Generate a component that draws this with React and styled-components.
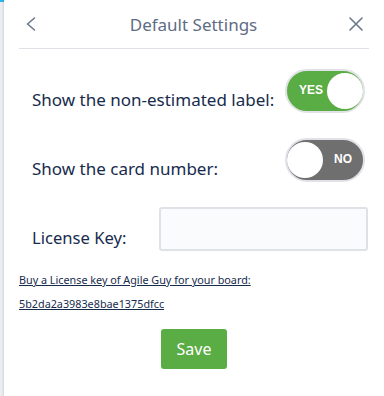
import styled, { createGlobalStyle } from 'styled-components'

const GlobalStyle = createGlobalStyle`
  body {
    margin: 0;
    background: #fff;
    font-family: "Noto Sans", "Open Sans", sans-serif;
  }
`;

const Page = styled.div`
  display: flex;
  width: 384px;
  height: 396px;
  overflow: hidden;
`;

const Backdrop = styled.div`
  width: 4px;
  flex-shrink: 0;
  background: #eceef2;
  border-top: 2px solid #29b6e8;
`;

const Panel = styled.div`
  flex: 1;
  background: #fff;
  padding: 0 15px;
  box-shadow: -1px 0 2px rgba(9, 30, 66, 0.12);
`;

const Header = styled.div`
  display: flex;
  align-items: center;
  justify-content: space-between;
  height: 48px;
  padding: 0 1px 0 0;
  border-bottom: 1px solid #dfe1e6;
`;

const IconButton = styled.button`
  display: flex;
  align-items: center;
  justify-content: center;
  width: 24px;
  height: 24px;
  padding: 0;
  border: none;
  background: none;
  color: #6b778c;
  cursor: pointer;
`;

const Title = styled.h2`
  margin: 0;
  font-size: 17px;
  font-weight: 400;
  color: #5e6c84;
`;

const Body = styled.div`
  padding: 20px 0 0;
`;

const Row = styled.div`
  display: flex;
  align-items: flex-start;
  justify-content: space-between;
  padding-left: 13px;
  margin-bottom: 25px;
`;

const Label = styled.label`
  padding-top: 19px;
  font-size: ${p => p.size || 17}px;
  line-height: 24px;
  color: #172b4d;
`;

const Switch = styled.div`
  position: relative;
  display: flex;
  align-items: center;
  justify-content: ${p => (p.on ? 'flex-start' : 'flex-end')};
  box-sizing: border-box;
  width: 80px;
  height: 44px;
  margin-right: 4px;
  padding: 0 11px 0 12px;
  border: 2px solid #e1e2e8;
  border-radius: 22px;
  background: ${p => (p.on ? '#5aac44' : '#6f6f6f')};
`;

const SwitchText = styled.span`
  font-family: "Liberation Sans", Arial, sans-serif;
  font-weight: 700;
  font-size: 12px;
  color: #fff;
  margin-top: -2px;
`;

const Knob = styled.span`
  position: absolute;
  top: 2px;
  ${p => (p.on ? 'right: 0;' : 'left: 0;')}
  width: 36px;
  height: 36px;
  border-radius: 50%;
  background: #fff;
`;

const KeyRow = styled.div`
  display: flex;
  align-items: flex-start;
  justify-content: space-between;
  padding-left: 13px;
`;

const Input = styled.input`
  width: 209px;
  height: 44px;
  margin-right: 1px;
  box-sizing: border-box;
  background: #fafbfc;
  border: 2px solid #dfe1e6;
  border-radius: 3px;
  outline: none;
`;

const Links = styled.div`
  display: flex;
  flex-direction: column;
  gap: 8px;
  margin-top: 21px;
`;

const Link = styled.a`
  font-size: 10.8px;
  line-height: 16px;
  color: #172b4d;
  text-decoration: underline;
`;

const Footer = styled.div`
  display: flex;
  justify-content: center;
  margin-top: 17px;
`;

const SaveButton = styled.button`
  width: 66px;
  height: 40px;
  border: none;
  border-radius: 3px;
  background: #5aac44;
  color: #fff;
  font-family: inherit;
  font-size: 16px;
  cursor: pointer;
`;

const Toggle = ({ on }) => (
  <Switch on={on}>
    <SwitchText>{on ? 'YES' : 'NO'}</SwitchText>
    <Knob on={on} />
  </Switch>
);

const App = () => {
  return (
    <Page>
      <GlobalStyle />
      <Backdrop />
      <Panel>
        <Header>
          <IconButton aria-label="Back">
            <svg width="16" height="16" viewBox="0 0 16 16" fill="none" stroke="currentColor" strokeWidth="1.6" strokeLinecap="round" strokeLinejoin="round">
              <path d="M11.5 2 L4.5 8 L11.5 14" />
            </svg>
          </IconButton>
          <Title>Default Settings</Title>
          <IconButton aria-label="Close">
            <svg width="16" height="16" viewBox="0 0 16 16" fill="none" stroke="currentColor" strokeWidth="1.6" strokeLinecap="round">
              <path d="M2 2 L14 14 M14 2 L2 14" />
            </svg>
          </IconButton>
        </Header>
        <Body>
          <Row>
            <Label>Show the non-estimated label:</Label>
            <Toggle on />
          </Row>
          <Row>
            <Label>Show the card number:</Label>
            <Toggle on={false} />
          </Row>
          <KeyRow>
            <Label size={16.6}>License Key:</Label>
            <Input type="text" />
          </KeyRow>
          <Links>
            <Link href="#">Buy a License key of Agile Guy for your board:</Link>
            <Link href="#">5b2da2a3983e8bae1375dfcc</Link>
          </Links>
          <Footer>
            <SaveButton>Save</SaveButton>
          </Footer>
        </Body>
      </Panel>
    </Page>
  )
}

export default App
